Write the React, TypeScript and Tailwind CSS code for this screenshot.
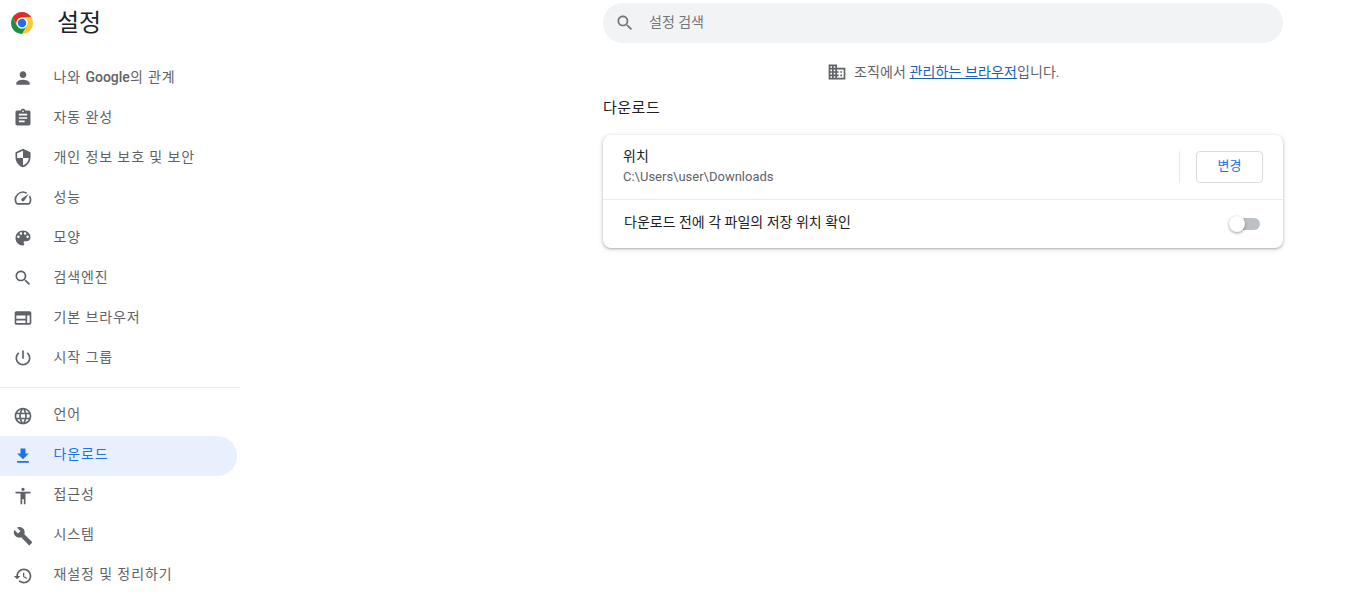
const icons = {
  person: "M12 12c2.21 0 4-1.79 4-4s-1.79-4-4-4-4 1.79-4 4 1.79 4 4 4zm0 2c-2.67 0-8 1.34-8 4v2h16v-2c0-2.66-5.33-4-8-4z",
  assignment: "M19 3h-4.18C14.4 1.84 13.3 1 12 1c-1.3 0-2.4.84-2.82 2H5c-1.1 0-2 .9-2 2v14c0 1.1.9 2 2 2h14c1.1 0 2-.9 2-2V5c0-1.1-.9-2-2-2zm-7 0c.55 0 1 .45 1 1s-.45 1-1 1-1-.45-1-1 .45-1 1-1zm2 14H7v-2h7v2zm3-4H7v-2h10v2zm0-4H7V7h10v2z",
  shield: "M12 1L3 5v6c0 5.55 3.84 10.74 9 12 5.16-1.26 9-6.45 9-12V5l-9-4zm0 10.99h7c-.53 4.12-3.28 7.79-7 8.94V12H5V6.3l7-3.11v8.8z",
  speed: "M20.38 8.57l-1.23 1.85a8 8 0 0 1-.22 7.58H5.07A8 8 0 0 1 15.58 6.85l1.85-1.23A10 10 0 0 0 3.35 19a2 2 0 0 0 1.72 1h13.85a2 2 0 0 0 1.74-1 10 10 0 0 0-.27-10.44zm-9.79 6.84a2 2 0 0 0 2.83 0l5.66-8.49-8.49 5.66a2 2 0 0 0 0 2.83z",
  palette: "M12 3c-4.97 0-9 4.03-9 9s4.03 9 9 9c.83 0 1.5-.67 1.5-1.5 0-.39-.15-.74-.39-1.01-.23-.26-.38-.61-.38-.99 0-.83.67-1.5 1.5-1.5H16c2.76 0 5-2.24 5-5 0-4.42-4.03-8-9-8zm-5.5 9c-.83 0-1.5-.67-1.5-1.5S5.67 9 6.5 9 8 9.67 8 10.5 7.33 12 6.5 12zm3-4C8.67 8 8 7.33 8 6.5S8.67 5 9.5 5s1.5.67 1.5 1.5S10.33 8 9.5 8zm5 0c-.83 0-1.5-.67-1.5-1.5S13.67 5 14.5 5s1.5.67 1.5 1.5S15.33 8 14.5 8zm3 4c-.83 0-1.5-.67-1.5-1.5S16.67 9 17.5 9s1.5.67 1.5 1.5-.67 1.5-1.5 1.5z",
  search: "M15.5 14h-.79l-.28-.27C15.41 12.59 16 11.11 16 9.5 16 5.91 13.09 3 9.5 3S3 5.91 3 9.5 5.91 16 9.5 16c1.61 0 3.09-.59 4.23-1.57l.27.28v.79l5 4.99L20.49 19l-4.99-5zm-6 0C7.01 14 5 11.99 5 9.5S7.01 5 9.5 5 14 7.01 14 9.5 11.99 14 9.5 14z",
  browser: "M20 4H4c-1.1 0-2 .9-2 2v12c0 1.1.9 2 2 2h16c1.1 0 2-.9 2-2V6c0-1.1-.9-2-2-2zM4 13V9h11v4H4zm0 5v-3h11v3H4zm16 0h-3V9h3v9z",
  power: "M13 3h-2v10h2V3zm4.83 2.17l-1.42 1.42C17.99 7.86 19 9.81 19 12c0 3.87-3.13 7-7 7s-7-3.13-7-7c0-2.19 1.01-4.14 2.58-5.42L6.17 5.17C4.23 6.82 3 9.26 3 12c0 4.97 4.03 9 9 9s9-4.03 9-9c0-2.74-1.23-5.18-3.17-6.83z",
  language: "M11.99 2C6.47 2 2 6.48 2 12s4.47 10 9.99 10C17.52 22 22 17.52 22 12S17.52 2 11.99 2zm6.93 6h-2.95c-.32-1.25-.78-2.45-1.38-3.56 1.84.63 3.37 1.91 4.33 3.56zM12 4.04c.83 1.2 1.48 2.53 1.91 3.96h-3.82c.43-1.43 1.08-2.76 1.91-3.96zM4.26 14C4.1 13.36 4 12.69 4 12s.1-1.36.26-2h3.38c-.08.66-.14 1.32-.14 2 0 .68.06 1.34.14 2H4.26zm.82 2h2.95c.32 1.25.78 2.45 1.38 3.56-1.84-.63-3.37-1.9-4.33-3.56zm2.95-8H5.08c.96-1.66 2.49-2.93 4.33-3.56C8.81 5.55 8.35 6.75 8.03 8zM12 19.96c-.83-1.2-1.48-2.53-1.91-3.96h3.82c-.43 1.43-1.08 2.76-1.91 3.96zM14.34 14H9.66c-.09-.66-.16-1.32-.16-2 0-.68.07-1.35.16-2h4.68c.09.65.16 1.32.16 2 0 .68-.07 1.34-.16 2zm.25 5.56c.6-1.11 1.06-2.31 1.38-3.56h2.95c-.96 1.65-2.49 2.93-4.33 3.56zM16.36 14c.08-.66.14-1.32.14-2 0-.68-.06-1.34-.14-2h3.38c.16.64.26 1.31.26 2s-.1 1.36-.26 2h-3.38z",
  download: "M19 9h-4V3H9v6H5l7 7 7-7zM5 18v2h14v-2H5z",
  accessibility: "M12 2c1.1 0 2 .9 2 2s-.9 2-2 2-2-.9-2-2 .9-2 2-2zm9 7h-6v13h-2v-6h-2v6H9V9H3V7h18v2z",
  build: "M22.7 19l-9.1-9.1c.9-2.3.4-5-1.5-6.9-2-2-5-2.4-7.4-1.3L9 6 6 9 1.6 4.7C.4 7.1.9 10.1 2.9 12.1c1.9 1.9 4.6 2.4 6.9 1.5l9.1 9.1c.4.4 1 .4 1.4 0l2.3-2.3c.5-.4.5-1.1.1-1.4z",
  restore: "M13 3c-4.97 0-9 4.03-9 9H1l3.89 3.89.07.14L9 12H6c0-3.87 3.13-7 7-7s7 3.13 7 7-3.13 7-7 7c-1.93 0-3.68-.79-4.94-2.06l-1.42 1.42C8.27 19.99 10.51 21 13 21c4.97 0 9-4.03 9-9s-4.03-9-9-9zm-1 5v5l4.28 2.54.72-1.21-3.5-2.08V8H12z",
  domain: "M12 7V3H2v18h20V7H12zM6 19H4v-2h2v2zm0-4H4v-2h2v2zm0-4H4V9h2v2zm0-4H4V5h2v2zm4 12H8v-2h2v2zm0-4H8v-2h2v2zm0-4H8V9h2v2zm0-4H8V5h2v2zm10 12h-8v-2h2v-2h-2v-2h2v-2h-2V9h8v10zm-2-8h-2v2h2v-2zm0 4h-2v2h2v-2z",
};

function Icon({ d, className }: { d: string; className: string }) {
  return (
    <svg viewBox="0 0 24 24" fill="currentColor" fillRule="evenodd" className={className}>
      <path d={d} />
    </svg>
  );
}

function ChromeLogo() {
  return (
    <svg viewBox="0 0 48 48" className="h-6 w-6 shrink-0">
      <path fill="#d93025" d="M4.95 13A22 22 0 0 1 43.05 13H24A11 11 0 0 0 14.47 29.5z" />
      <path fill="#fcc934" d="M43.05 13A22 22 0 0 1 24 46L33.53 29.5A11 11 0 0 0 24 13z" />
      <path fill="#1e8e3e" d="M24 46A22 22 0 0 1 4.95 13L14.47 29.5A11 11 0 0 0 33.53 29.5z" />
      <circle cx="24" cy="24" r="11" fill="#fff" />
      <circle cx="24" cy="24" r="8.5" fill="#1a73e8" />
    </svg>
  );
}

const topItems = [
  { icon: icons.person, label: <>나와 <span className="font-medium tracking-normal">Google</span>의 관계</> },
  { icon: icons.assignment, label: "자동 완성" },
  { icon: icons.shield, label: "개인 정보 보호 및 보안" },
  { icon: icons.speed, label: "성능" },
  { icon: icons.palette, label: "모양" },
  { icon: icons.search, label: "검색엔진" },
  { icon: icons.browser, label: "기본 브라우저" },
  { icon: icons.power, label: "시작 그룹" },
];

const bottomItems = [
  { icon: icons.language, label: "언어" },
  { icon: icons.download, label: "다운로드", active: true },
  { icon: icons.accessibility, label: "접근성" },
  { icon: icons.build, label: "시스템" },
  { icon: icons.restore, label: "재설정 및 정리하기" },
];

function NavItem({ icon, label, active, raised }: { icon: string; label: React.ReactNode; active?: boolean; raised?: boolean }) {
  return (
    <div
      className={
        active
          ? "flex h-10 w-[237px] items-center rounded-r-[20px] bg-[#e8f0fe] pl-[13px] text-[#1a73e8]"
          : "flex h-10 w-[237px] items-center pl-[13px] text-[#5f6368]"
      }
    >
      <Icon d={icon} className="h-5 w-5 shrink-0" />
      <span
        className={
          raised
            ? "ml-[20.5px] pb-1 text-[14px] leading-5 tracking-[0.9px]"
            : "ml-[20.5px] pb-[2px] text-[14px] leading-5 tracking-[0.9px]"
        }
      >
        {label}
      </span>
    </div>
  );
}

export default function App() {
  return (
    <div className="flex h-[597px] overflow-hidden bg-white font-['Roboto','Noto_Sans_CJK_KR',sans-serif]">
      <aside className="w-[240px] shrink-0">
        <div className="flex h-[58px] items-start pl-[10px] pt-[11px]">
          <ChromeLogo />
          <span className="ml-[23px] text-[24px] leading-6 text-[#202124]">설정</span>
        </div>
        {topItems.map((item, index) => (
          <NavItem key={index} icon={item.icon} label={item.label} />
        ))}
        <div className="mb-2 mt-[9px] h-px w-[240px] bg-[#e8eaed]" />
        {bottomItems.map((item, index) => (
          <NavItem key={index} icon={item.icon} label={item.label} active={item.active} raised />
        ))}
      </aside>

      <main className="ml-[363px] w-[680px] shrink-0 pt-[3px]">
        <div className="flex h-10 items-center rounded-[20px] bg-[#f1f3f4] pl-3 text-[#757575]">
          <Icon d={icons.search} className="h-5 w-5 shrink-0" />
          <span className="ml-[14px] pb-[2px] text-[14px]">설정 검색</span>
        </div>

        <div className="mt-[19px] flex h-5 items-center pl-[224px] text-[14px] text-[#5f6368]">
          <Icon d={icons.domain} className="h-5 w-5 shrink-0" />
          <span className="ml-[7px] tracking-[0.1px]">
            조직에서 <span className="text-[#1a62b8] underline">관리하는 브라우저</span>입니다.
          </span>
        </div>

        <h2 className="mt-4 text-[15px] font-normal leading-5 tracking-[0.5px] text-[#202124]">다운로드</h2>

        <div className="mt-[17px] h-[113px] rounded-lg bg-white shadow-[0_1px_2px_rgba(60,64,67,0.3),0_1px_4px_1px_rgba(60,64,67,0.15)]">
          <div className="flex h-16 items-center pl-5 pr-5">
            <div className="flex-1 pb-[2px]">
              <div className="text-[14px] leading-5 text-[#202124]">위치</div>
              <div className="mt-px text-[13px] leading-5 text-[#5f6368]">C:\Users\user\Downloads</div>
            </div>
            <div className="h-8 w-px bg-[#e8eaed]" />
            <button className="ml-4 h-8 w-[67px] rounded border border-[#dadce0] pb-[2px] text-[13px] text-[#1a73e8]">변경</button>
          </div>
          <div className="flex h-[49px] items-center border-t border-[#e8eaed] pl-[21px] pr-[23px]">
            <span className="flex-1 pb-1 text-[14px] text-[#202124]">다운로드 전에 각 파일의 저장 위치 확인</span>
            <div className="relative h-3 w-[30px] rounded-md bg-[#bdc1c6]">
              <div className="absolute -left-px -top-[2px] h-4 w-4 rounded-full bg-white shadow-[0_1px_3px_rgba(0,0,0,0.4)]" />
            </div>
          </div>
        </div>
      </main>
    </div>
  );
}
